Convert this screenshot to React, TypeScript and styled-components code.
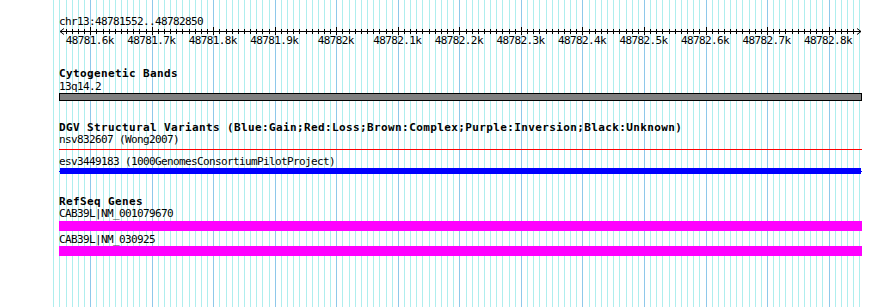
import React from 'react';
import styled, { createGlobalStyle } from 'styled-components';

const GlobalStyle = createGlobalStyle`
  html, body {
    margin: 0;
    padding: 0;
    background: #fff;
  }
`;

// view: 48781552..48782850, 100bp = 61.53px, first major (48781.6k) at x=90.7
const MAJOR0 = 90.7;
const STEP = 6.153;
const COL_LEFT = 59;
const WIDTH = 803;

const minorXs: number[] = [];
for (let n = -6; n <= 125; n++) minorXs.push(MAJOR0 + STEP * n);

const majorLabels = [
  '48781.6k', '48781.7k', '48781.8k', '48781.9k', '48782k', '48782.1k', '48782.2k',
  '48782.3k', '48782.4k', '48782.5k', '48782.6k', '48782.7k', '48782.8k',
];

const px = (x: number) => Math.floor(x) + 0.5;

const Page = styled.div`
  position: relative;
  width: 890px;
  height: 307px;
  overflow: hidden;
  background: #fff;
`;

const GridLayer = styled.svg`
  position: absolute;
  left: 0;
  top: 0;
  z-index: 0;
`;

const Column = styled.div`
  position: relative;
  z-index: 1;
  display: flex;
  flex-direction: column;
  margin-left: ${COL_LEFT}px;
  width: ${WIDTH}px;
  padding-top: 16px;
`;

const Label = styled.div<{ $mt?: number }>`
  height: 12px;
  margin-top: ${(p) => p.$mt ?? 0}px;
  font-family: 'DejaVu Sans Mono', monospace;
  font-size: 11px;
  letter-spacing: -0.62px;
  line-height: 12px;
  color: #000;
  white-space: nowrap;
`;

const TrackTitle = styled.div<{ $mt?: number }>`
  height: 12px;
  margin-top: ${(p) => p.$mt ?? 0}px;
  font-family: 'DejaVu Sans Mono', monospace;
  font-size: 11px;
  font-weight: bold;
  letter-spacing: 0.38px;
  line-height: 12px;
  color: #000;
  white-space: nowrap;
`;

const Ruler = styled.svg`
  display: block;
  overflow: visible;
  font-family: 'DejaVu Sans Mono', monospace;
  font-size: 11px;
  letter-spacing: -0.62px;
`;

const Bar = styled.div<{ $color: string; $h: number; $mt?: number; $border?: boolean }>`
  box-sizing: border-box;
  flex: none;
  width: 100%;
  height: ${(p) => p.$h}px;
  margin-top: ${(p) => p.$mt ?? 0}px;
  background: ${(p) => p.$color};
  border: ${(p) => (p.$border ? '1px solid #000' : 'none')};
`;

const Feature = styled.div<{ $color: string; $h: number }>`
  position: relative;
  flex: none;
  height: ${(p) => p.$h}px;
  width: 100%;

  &::before {
    content: '';
    position: absolute;
    left: 0;
    right: 0;
    top: ${(p) => Math.floor(p.$h / 2)}px;
    height: 1px;
    background: ${(p) => p.$color};
  }

  &::after {
    content: '';
    position: absolute;
    left: 1px;
    right: 1px;
    top: 0;
    bottom: 0;
    background: ${(p) => p.$color};
  }
`;

function Grid() {
  return (
    <GridLayer width={890} height={307}>
      {minorXs.map((x, i) => {
        const major = (i - 6) % 10 === 0;
        return (
          <line
            key={i}
            x1={px(x)}
            x2={px(x)}
            y1={0}
            y2={307}
            stroke={major ? '#8ec8ea' : '#aeeeee'}
            strokeWidth={1}
          />
        );
      })}
    </GridLayer>
  );
}

function ScaleBar() {
  const rel = (x: number) => px(x) - COL_LEFT;
  const y = 3.5;
  const left = 60 - COL_LEFT;
  const right = 861 - COL_LEFT;
  return (
    <Ruler width={WIDTH} height={20}>
      <line x1={left} x2={right} y1={y} y2={y} stroke="#000" strokeWidth={1} />
      <polyline points={`${left + 4},${y - 3} ${left},${y} ${left + 4},${y + 3}`} fill="none" stroke="#000" strokeWidth={1} />
      <polyline points={`${right - 4},${y - 3} ${right},${y} ${right - 4},${y + 3}`} fill="none" stroke="#000" strokeWidth={1} />
      {minorXs.slice(2, 131).map((x, i) => {
        const major = (i - 4) % 10 === 0;
        return (
          <line
            key={i}
            x1={rel(x)}
            x2={rel(x)}
            y1={major ? -1 : 1}
            y2={major ? 7 : 6}
            stroke="#000"
            strokeWidth={1}
          />
        );
      })}
      {majorLabels.map((t, k) => (
        <text key={t} x={MAJOR0 + 61.53 * k - 1 - COL_LEFT} y={16} textAnchor="middle" fill="#000">
          {t}
        </text>
      ))}
    </Ruler>
  );
}

export default function App() {
  return (
    <>
      <GlobalStyle />
      <Page>
        <Grid />
        <Column>
          <Label>chr13:48781552..48782850</Label>
          <ScaleBar />

          <TrackTitle $mt={20}>Cytogenetic Bands</TrackTitle>
          <Label $mt={1}>13q14.2</Label>
          <Bar $color="#808080" $h={8} $border />

          <TrackTitle $mt={21}>DGV Structural Variants (Blue:Gain;Red:Loss;Brown:Complex;Purple:Inversion;Black:Unknown)</TrackTitle>
          <Label>nsv832607 (Wong2007)</Label>
          <Bar $color="#ff0000" $h={1} $mt={3} />
          <Label $mt={6}>esv3449183 (1000GenomesConsortiumPilotProject)</Label>
          <Feature $color="#0000ff" $h={6} />

          <TrackTitle $mt={22}>RefSeq Genes</TrackTitle>
          <Label>CAB39L|NM_001079670</Label>
          <Bar $color="#ff00ff" $h={10} $mt={1} />
          <Label $mt={3}>CAB39L|NM_030925</Label>
          <Bar $color="#ff00ff" $h={10} />
        </Column>
      </Page>
    </>
  );
}
